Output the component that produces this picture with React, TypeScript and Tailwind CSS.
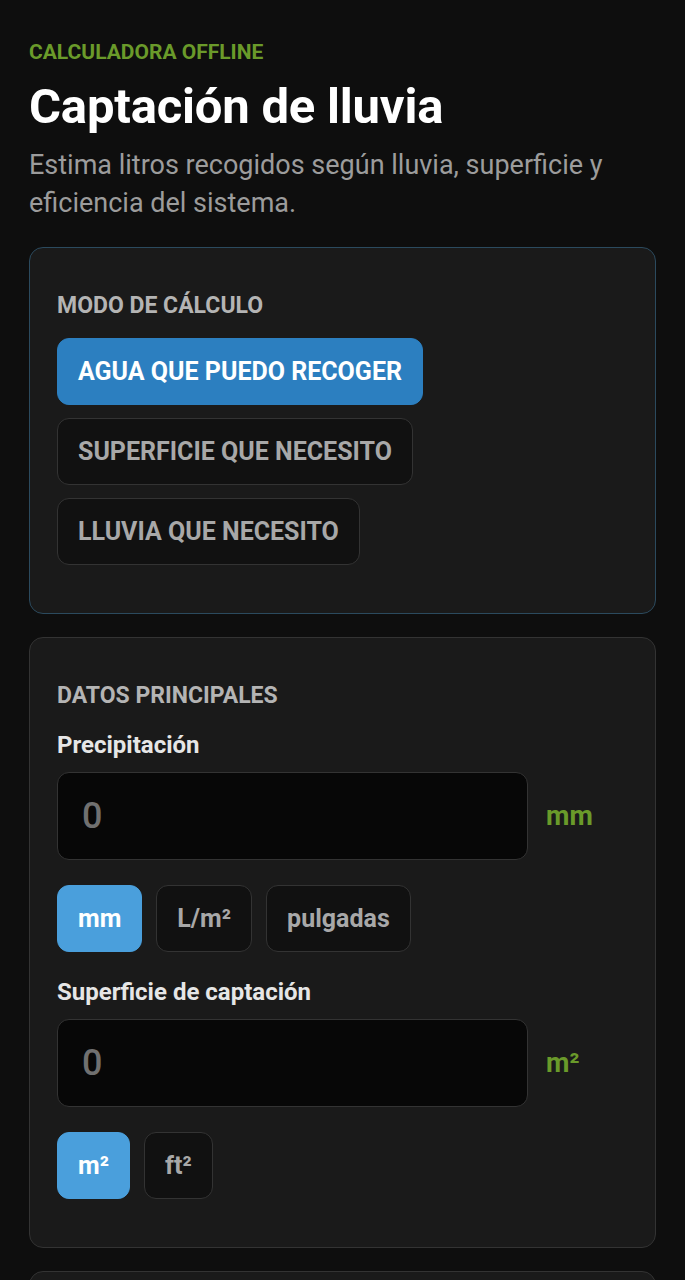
import { useState } from "react";

const MODES = [
  { id: "collect", label: "Agua que puedo recoger" },
  { id: "area", label: "Superficie que necesito" },
  { id: "rain", label: "Lluvia que necesito" },
];

const RAIN_UNITS = ["mm", "L/m²", "pulgadas"];
const AREA_UNITS = ["m²", "ft²"];

function UnitToggle({
  options,
  value,
  onChange,
}: {
  options: string[];
  value: string;
  onChange: (v: string) => void;
}) {
  return (
    <div className="flex flex-wrap gap-[14px] mt-[25px]">
      {options.map((opt) => (
        <button
          key={opt}
          onClick={() => onChange(opt)}
          className={
            opt === value
              ? "h-[67px] px-[20px] rounded-[12px] bg-[#4a9fdc] border border-[#4a9fdc] text-white text-[25px] font-bold"
              : "h-[67px] px-[20px] rounded-[12px] bg-[#111111] border border-[#333333] text-[#a8a8a8] text-[25px] font-bold"
          }
        >
          {opt}
        </button>
      ))}
    </div>
  );
}

function NumberField({
  label,
  unit,
  units,
}: {
  label: string;
  unit: string;
  units: string[];
}) {
  const [value, setValue] = useState("");
  const [selected, setSelected] = useState(unit);

  return (
    <div>
      <label className="block text-[24px] font-bold text-[#e6e6e6] leading-[30px]">
        {label}
      </label>
      <div className="flex items-center gap-[18px] mt-[12px]">
        <input
          type="number"
          value={value}
          onChange={(e) => setValue(e.target.value)}
          placeholder="0"
          className="w-[471px] h-[88px] rounded-[12px] bg-[#070707] border border-[#333333] px-[24px] text-[36px] font-medium text-white placeholder:text-[#707070] outline-none"
        />
        <span className="text-[27px] font-bold text-[#6a9a2a]">{selected}</span>
      </div>
      <UnitToggle options={units} value={selected} onChange={setSelected} />
    </div>
  );
}

export default function App() {
  const [mode, setMode] = useState("collect");

  return (
    <div
      className="min-h-screen bg-[#0e0e0e] px-[29px] pt-[38px] pb-10"
      style={{ fontFamily: "Roboto, 'Liberation Sans', sans-serif" }}
    >
      <p className="text-[21px] font-bold text-[#6a9a2a] uppercase leading-[28px]">
        Calculadora offline
      </p>
      <h1 className="mt-[13px] text-[49px] font-bold text-white leading-[56px] tracking-[-0.2px]">
        Captación de lluvia
      </h1>
      <p className="mt-[11px] text-[27px] text-[#9c9c9c] leading-[38px]">
        Estima litros recogidos según lluvia, superficie y eficiencia del
        sistema.
      </p>

      {/* Modo de cálculo */}
      <section className="mt-[25px] rounded-[14px] border border-[#2b4a5e] bg-[#1a1a1a] px-[27px] pt-[44px] pb-[48px]">
        <h2 className="text-[23px] font-bold uppercase text-[#b4b4b4] leading-[28px]">
          Modo de cálculo
        </h2>
        <div className="flex flex-col items-start gap-[13px] mt-[18px]">
          {MODES.map((m) => (
            <button
              key={m.id}
              onClick={() => setMode(m.id)}
              className={
                m.id === mode
                  ? "h-[67px] px-[20px] rounded-[12px] bg-[#2c7fc0] border border-[#2c7fc0] text-white text-[25px] font-bold uppercase"
                  : "h-[67px] px-[20px] rounded-[12px] bg-[#111111] border border-[#333333] text-[#a8a8a8] text-[25px] font-bold uppercase"
              }
            >
              {m.label}
            </button>
          ))}
        </div>
      </section>

      {/* Datos principales */}
      <section className="mt-[23px] rounded-[14px] border border-[#333333] bg-[#1a1a1a] px-[27px] pt-[44px] pb-[48px]">
        <h2 className="text-[23px] font-bold uppercase text-[#b4b4b4] leading-[28px]">
          Datos principales
        </h2>
        <div className="mt-[20px] flex flex-col gap-[25px]">
          <NumberField label="Precipitación" unit="mm" units={RAIN_UNITS} />
          <NumberField label="Superficie de captación" unit="m²" units={AREA_UNITS} />
        </div>
      </section>

      <section className="mt-[23px] h-[200px] rounded-[14px] border border-[#333333] bg-[#1a1a1a]" />
    </div>
  );
}
